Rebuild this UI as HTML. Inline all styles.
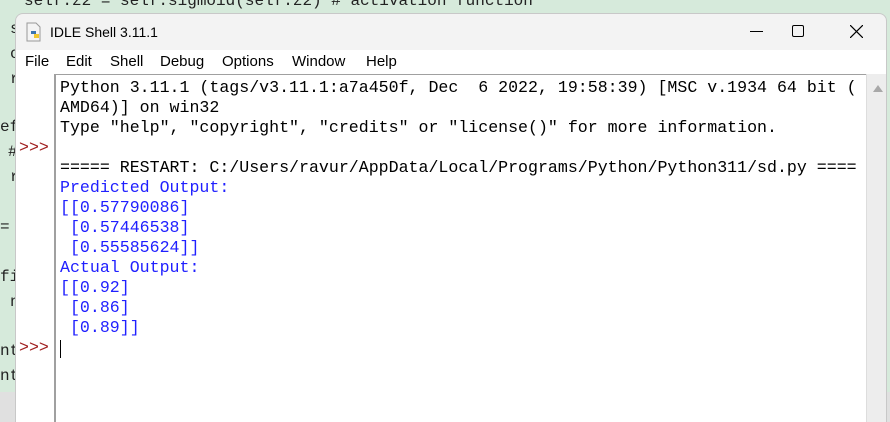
<!DOCTYPE html>
<html><head><style>
*{margin:0;padding:0;box-sizing:border-box}
body{width:890px;height:422px;overflow:hidden;background:#d6eadb;position:relative;font-family:"Liberation Sans",sans-serif}
.bg{position:absolute;left:0;font-family:"Liberation Mono",monospace;font-size:16px;color:#222;white-space:pre}
.win{position:absolute;left:15px;top:13px;width:872px;height:409px;background:#f3f3f3;border:1px solid #c8c8c8;border-bottom:none;border-radius:8px 8px 0 0;overflow:hidden}
.title{position:absolute;left:34px;top:10px;font-size:14px;color:#000}
.menu{position:absolute;left:0;top:36px;width:100%;height:24px;background:#fff;font-size:15px}
.menu span{position:absolute;top:3px}
.gut{position:absolute;left:0;top:60px;width:38px;height:400px;background:#fff}
.sep{position:absolute;left:38px;top:60px;width:2px;height:400px;background:#a0a0a0}
.txt{position:absolute;left:40px;top:60px;width:810px;height:400px;background:#fff;border-top:1px solid #a0a0a0}
.sb{position:absolute;left:850px;top:60px;width:22px;height:400px;background:#ededed;border-left:1px solid #ddd}
pre{position:absolute;font-family:"Liberation Mono",monospace;font-size:16.6px;line-height:20px;white-space:pre}
</style></head><body>
<div class="bg" style="top:-8px;left:24px">self.z2 = self.sigmoid(self.z2) # activation function</div>
<div class="bg" style="top:20px;left:10px">s</div>
<div class="bg" style="top:45px;left:10px">o</div>
<div class="bg" style="top:70px;left:10px">r</div>
<div class="bg" style="top:118px;left:0">ef</div>
<div class="bg" style="top:143px;left:8px">#</div>
<div class="bg" style="top:168px;left:10px">r</div>
<div class="bg" style="top:218px;left:0">=</div>
<div class="bg" style="top:268px;left:0">fi</div>
<div class="bg" style="top:293px;left:10px">n</div>
<div class="bg" style="top:342px;left:0">nt</div>
<div class="bg" style="top:367px;left:0">nt</div>
<div style="position:absolute;left:0;top:392px;width:15px;height:30px;background:#e0e0e0"></div>
<div style="position:absolute;left:887px;top:392px;width:3px;height:30px;background:#e0e0e0"></div>
<div class="win">
 <svg style="position:absolute;left:9px;top:8px" width="18" height="20"><path d="M2 1h9l4 4v14H2z" fill="#f4f4f4" stroke="#999"/><path d="M6 9h5v3H6z" fill="#3a74b0"/><path d="M9 12h5v4H9z" fill="#f0c830"/></svg>
 <div class="title">IDLE Shell 3.11.1</div>
 <div style="position:absolute;left:734px;top:17px;width:13px;height:1px;background:#000"></div>
 <div style="position:absolute;left:776px;top:11px;width:12px;height:12px;border:1px solid #000;border-radius:2px"></div>
 <svg style="position:absolute;left:834px;top:11px" width="13" height="13"><path d="M0 0L13 13M13 0L0 13" stroke="#000" stroke-width="1.2"/></svg>
 <div class="menu"><span style="left:9px">File</span><span style="left:50px">Edit</span><span style="left:94px">Shell</span><span style="left:144px">Debug</span><span style="left:206px">Options</span><span style="left:276px">Window</span><span style="left:350px">Help</span></div>
 <div class="gut"></div>
 <div class="txt"></div>
 <div class="sep"></div>
 <div class="sb"><svg style="position:absolute;left:6px;top:11px" width="10" height="7"><path d="M0 7L5 0L10 7z" fill="#a8a8a8"/></svg></div>
 <pre style="left:3px;top:124px;color:#a02020">&gt;&gt;&gt;</pre>
 <pre style="left:3px;top:324px;color:#a02020">&gt;&gt;&gt;</pre>
 <pre style="left:44px;top:64px;color:#000">Python 3.11.1 (tags/v3.11.1:a7a450f, Dec  6 2022, 19:58:39) [MSC v.1934 64 bit (
AMD64)] on win32
Type "help", "copyright", "credits" or "license()" for more information.

===== RESTART: C:/Users/ravur/AppData/Local/Programs/Python/Python311/sd.py ====
<span style="color:#2020ff">Predicted Output:
[[0.57790086]
 [0.57446538]
 [0.55585624]]
Actual Output:
[[0.92]
 [0.86]
 [0.89]]</span></pre>
 <div style="position:absolute;left:44px;top:326px;width:1px;height:18px;background:#000"></div>
</div>
</body></html>
